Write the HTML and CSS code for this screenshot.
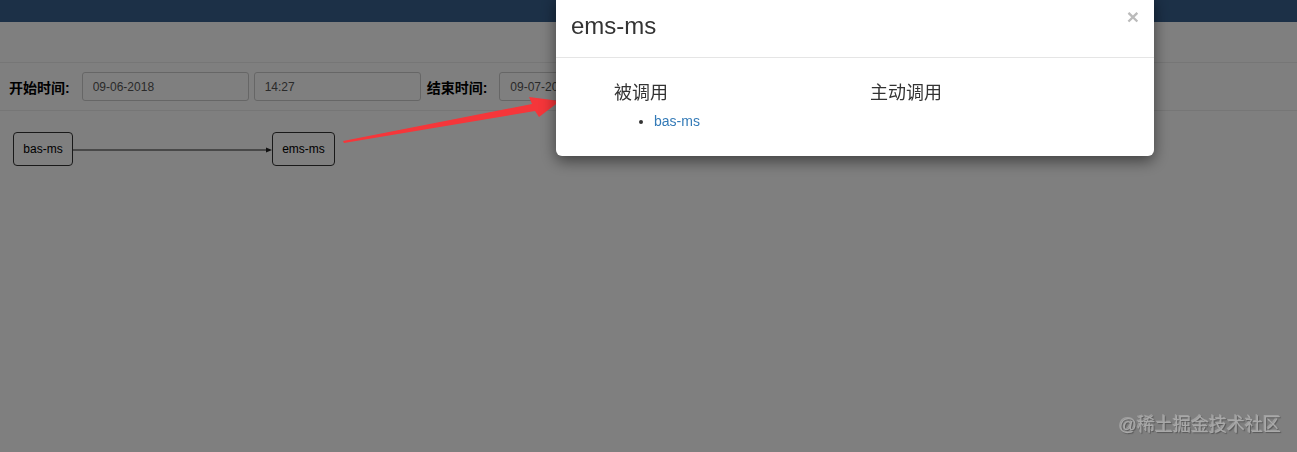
FILE: index.html
```html
<!DOCTYPE html>
<html lang="zh">
<head>
    <meta charset="UTF-8">
    <title>服务调用关系</title>
    <link rel="stylesheet" href="styles.css">
</head>
<body>

<div class="navbar"></div>
<div class="subbar"></div>

<!-- 查询条件 -->
<div class="toolbar">
    <label>开始时间:</label>
    <input class="field" type="text" value="09-06-2018">
    <input class="field" type="text" value="14:27">
    <label>结束时间:</label>
    <input class="field" type="text" value="09-07-2018">
    <input class="field" type="text" value="14:27">
</div>

<!-- 调用关系图 -->
<div class="graph">
    <svg class="edges" width="1297" height="120">
        <line x1="73" y1="39" x2="268" y2="39" stroke="#222" stroke-width="1"/>
        <polygon points="272,39 266,36.5 266,41.5" fill="#222"/>
    </svg>
    <div class="node node-bas">bas-ms</div>
    <div class="node node-ems">ems-ms</div>
</div>

<div class="backdrop"></div>

<svg class="annotation" width="1297" height="452">
    <polygon points="343,141 532,104 529,97 560,101 539,117 535,111 344,143" fill="#f5363a"/>
</svg>

<!-- 弹窗 -->
<div class="modal">
    <div class="modal-header">
        <span class="modal-title">ems-ms</span>
        <span class="close">&times;</span>
    </div>
    <div class="modal-body">
        <div class="col">
            <h4>被调用</h4>
            <ul>
                <li><a href="#">bas-ms</a></li>
            </ul>
        </div>
        <div class="col">
            <h4>主动调用</h4>
            <ul></ul>
        </div>
    </div>
</div>

<div class="watermark">@稀土掘金技术社区</div>

</body>
</html>
```

FILE: styles.css
```css
body {
    margin: 0;
    font-family: "Liberation Sans", "Noto Sans CJK SC", sans-serif;
    font-size: 12px;
    color: #000;
    background: #fff;
    height: 452px;
    overflow: hidden;
}
.navbar {
    height: 22px;
    background: #38618f;
}
.subbar {
    height: 40px;
    border-bottom: 1px solid #ececec;
}
.toolbar {
    display: flex;
    align-items: center;
    gap: 5px;
    height: 47px;
    padding-left: 9px;
    border-bottom: 1px solid #ececec;
}
.toolbar label {
    font-weight: bold;
    font-size: 14px;
    margin-right: 7px;
}
.field {
    width: 145px;
    height: 27px;
    padding: 0 10px;
    border: 1px solid #ccc;
    border-radius: 3px;
    font-family: inherit;
    font-size: 12px;
    color: #555;
    box-sizing: content-box;
}
.field + label {
    margin-left: 1px;
}
.graph {
    position: relative;
    height: 200px;
}
.edges {
    position: absolute;
    left: 0;
    top: 0;
}
.node {
    position: absolute;
    top: 21px;
    height: 32px;
    display: flex;
    align-items: center;
    justify-content: center;
    border: 1px solid #333;
    border-radius: 4px;
    background: #fff;
    font-size: 12px;
}
.node-bas {
    left: 13px;
    width: 58px;
}
.node-ems {
    left: 272px;
    width: 61px;
}
.backdrop {
    position: fixed;
    left: 0;
    top: 0;
    width: 100%;
    height: 100%;
    background: rgba(0, 0, 0, 0.5);
}
.annotation {
    position: fixed;
    left: 0;
    top: 0;
}
.modal {
    position: fixed;
    left: 556px;
    top: -6px;
    width: 598px;
    background: #fff;
    border-radius: 6px;
    box-shadow: 0 5px 15px rgba(0, 0, 0, 0.5);
}
.modal-header {
    display: flex;
    justify-content: space-between;
    align-items: flex-start;
    height: 64px;
    padding: 0 15px;
    border-bottom: 1px solid #e5e5e5;
    box-sizing: border-box;
}
.modal-title {
    margin-top: 18px;
    font-size: 24px;
    color: #333;
}
.close {
    margin-top: 12px;
    font-size: 21px;
    font-weight: bold;
    color: #bbb;
    line-height: 1;
}
.modal-body {
    display: flex;
    padding: 20px 0 25px 58px;
}
.col {
    width: 256px;
}
.col h4 {
    margin: 0;
    font-size: 18px;
    font-weight: normal;
    color: #333;
    line-height: 30px;
}
.col ul {
    margin: 3px 0 0;
    padding-left: 40px;
    font-size: 14px;
    line-height: 20px;
    color: #333;
}
.col a {
    color: #337ab7;
    text-decoration: none;
}
.watermark {
    position: fixed;
    right: 16px;
    bottom: 16px;
    font-size: 18px;
    color: #a9a9a9;
    text-shadow: 1px 1px 1px rgba(60, 60, 60, 0.6), -1px -1px 0 rgba(255, 255, 255, 0.25);
}
```
